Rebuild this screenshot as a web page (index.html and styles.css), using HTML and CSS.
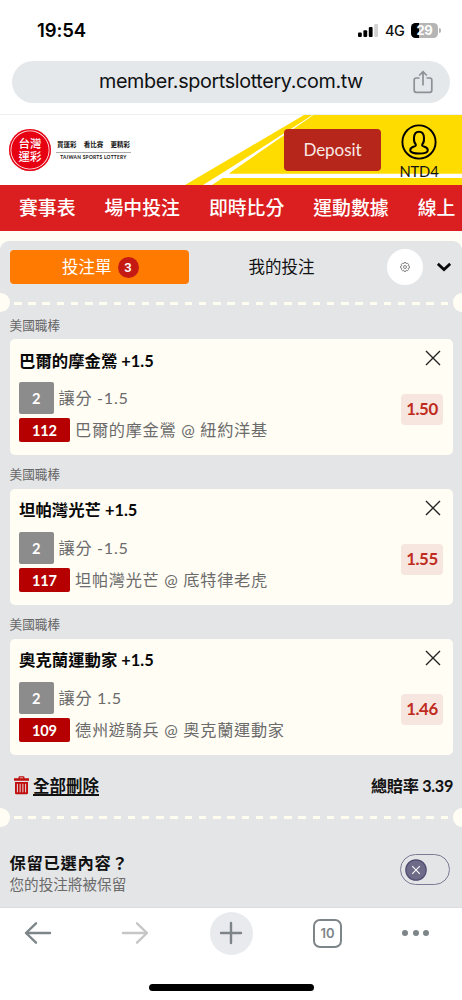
FILE: index.html
```html
<!DOCTYPE html>
<html lang="zh-Hant">
<head>
<meta charset="utf-8">
<meta name="viewport" content="width=device-width">
<title>台灣運彩</title>
<link rel="stylesheet" href="styles.css">
</head>
<body>
<header class="browser">
  <div class="status">
    <span class="clock">19:54</span>
    <svg class="signal" width="20" height="13" viewBox="0 0 20 13"><rect x="0" y="8.5" width="3.8" height="4.5" rx="1"/><rect x="5.4" y="6.2" width="3.8" height="6.8" rx="1"/><rect x="10.8" y="3" width="3.8" height="10" rx="1"/><rect x="16.2" y="0" width="3.8" height="13" rx="1" fill="#d2d2d2"/></svg>
    <span class="network">4G</span>
    <span class="battery">29</span><i class="battery-tip"></i>
  </div>
  <div class="address">
    <span class="url">member.sportslottery.com.tw</span>
    <svg class="share" width="20" height="24" viewBox="0 0 20 24"><path d="M6.500 8H3.200Q1.200 8 1.200 10v10.300q0 2 2 2h13.600q2 0 2-2V10q0-2-2-2h-3.300M10 15.500V2M6.200 5.500L10 1.700l3.800 3.800" fill="none" stroke="#8b9195" stroke-width="1.700"/></svg>
  </div>
</header>
<section class="brandbar">
  <svg class="stripes" width="462" height="70" viewBox="0 0 462 70"><path d="M304 0H462V70H185z" fill="#ffdc00"/><path d="M312 0.300L231 52.500L203 70H212L222.500 63H462V58.800H229L231 57L313.500 0z" fill="#fff"/></svg>
  <div class="seal"><span>台灣</span><span>運彩</span></div>
  <div class="slogan"><p class="slogan-zh"><span>買運彩</span><span>看比賽</span><span>更精彩</span></p><p class="slogan-en">TAIWAN SPORTS LOTTERY</p></div>
  <button class="deposit">Deposit</button>
  <div class="account">
    <svg width="36" height="36" viewBox="0 0 36 36" fill="none" stroke="#000"><circle cx="18" cy="18" r="16.600" stroke-width="1.900"/><path d="M14.700 20.200C13.200 18.800 12.800 16.500 13 14c.1-4 1.800-6.300 5-6.300s4.900 2.300 5 6.300c.2 2.500-.2 4.800-1.700 6.200-.6 1.600.3 2 2.200 2.600 2.200.7 3.300 1.600 3.300 3.500 0 2.300-4 3.300-8.800 3.300s-8.800-1-8.800-3.300c0-1.900 1.100-2.800 3.300-3.500 1.900-.6 2.800-1 2.200-2.600z" stroke-width="2"/></svg>
    <span>NTD4</span>
  </div>
</section>
<nav class="nav"><a>賽事表</a><a>場中投注</a><a>即時比分</a><a>運動數據</a><a>線上</a></nav>
<main class="page">
  <section class="slip">
    <div class="tabs">
      <div class="tab active">投注單<b>3</b></div>
      <div class="tab">我的投注</div>
      <div class="gear"><svg width="10" height="10" viewBox="0 0 10 10" fill="none" stroke="#666" stroke-width=".8"><path d="M4.200.5h1.600l.4 1.200 1.200-.6 1.200 1.200-.6 1.200 1.500.7v1.600L8.100 6.300l.5 1.300-1.100 1.100-1.300-.5-.5 1.300H4.300l-.5-1.300-1.300.5-1.100-1.100.5-1.300L.5 5.800V4.200l1.400-.6-.5-1.300 1.100-1.100 1.300.5z"/><circle cx="5" cy="5" r="1.500"/></svg></div>
      <svg class="chevron" width="14" height="10" viewBox="0 0 14 10"><path d="M.8 1.800L7 7.500L13.200 1.800" fill="none" stroke="#0a0a0a" stroke-width="2.800"/></svg>
    </div>
    <div class="tear"><i></i></div>

    <h3 class="league first">美國職棒</h3>
    <article class="bet">
      <div class="info">
        <h4>巴爾的摩金鶯 +1.5</h4>
        <p class="line"><b class="num grey">2</b>讓分 -1.5</p>
        <p class="line match"><b class="num red">112</b>巴爾的摩金鶯 @ 紐約洋基</p>
      </div>
      <div class="side"><svg class="close" width="16" height="16" viewBox="0 0 16 16"><path d="M1 1L15 15M15 1L1 15"/></svg><b class="odds">1.50</b></div>
    </article>

    <h3 class="league">美國職棒</h3>
    <article class="bet">
      <div class="info">
        <h4>坦帕灣光芒 +1.5</h4>
        <p class="line"><b class="num grey">2</b>讓分 -1.5</p>
        <p class="line match"><b class="num red">117</b>坦帕灣光芒 @ 底特律老虎</p>
      </div>
      <div class="side"><svg class="close" width="16" height="16" viewBox="0 0 16 16"><path d="M1 1L15 15M15 1L1 15"/></svg><b class="odds">1.55</b></div>
    </article>

    <h3 class="league">美國職棒</h3>
    <article class="bet">
      <div class="info">
        <h4>奧克蘭運動家 +1.5</h4>
        <p class="line"><b class="num grey">2</b>讓分 1.5</p>
        <p class="line match"><b class="num red">109</b>德州遊騎兵 @ 奧克蘭運動家</p>
      </div>
      <div class="side"><svg class="close" width="16" height="16" viewBox="0 0 16 16"><path d="M1 1L15 15M15 1L1 15"/></svg><b class="odds">1.46</b></div>
    </article>

    <div class="totals">
      <svg width="15" height="19" viewBox="0 0 15 19"><path d="M0 2.200H4.500V1.500Q4.500.3 5.700.3H9.300Q10.500.3 10.500 1.500V2.200H15V4.700H0zM5.800 1.500V2.200H9.200V1.500zM1 6H14V17Q14 18.300 12.700 18.300H2.300Q1 18.300 1 17z" fill="#c00d0d" fill-rule="evenodd"/><path d="M3.400 7.800V16.300M6.100 7.800V16.300M8.900 7.800V16.300M11.600 7.800V16.300" stroke="#eadada" stroke-width="1"/></svg>
      <a>全部刪除</a>
      <span>總賠率 3.39</span>
    </div>
    <div class="tear"><i></i></div>
    <div class="keep">
      <div><h4>保留已選內容？</h4><p>您的投注將被保留</p></div>
      <div class="toggle"><svg width="22" height="22" viewBox="0 0 22 22"><circle cx="11" cy="11" r="10.200" fill="#6e6b89" stroke="#4f4b70" stroke-width="1.200"/><path d="M7.200 7.200L14.800 14.800M14.800 7.200L7.200 14.800" stroke="#fff" stroke-width="1.100"/></svg></div>
    </div>
  </section>
</main>
<footer class="toolbar">
  <div class="tools">
    <svg width="28" height="24" viewBox="0 0 28 24"><path d="M26 12H2M12 2.300L2 12L12 21.700" stroke="#7d8589"/></svg>
    <svg class="forward" width="28" height="24" viewBox="0 0 28 24"><path d="M2 12H26M16 2.300L26 12L16 21.700" stroke="#c6c6c6"/></svg>
    <div class="plus"><svg width="24" height="24" viewBox="0 0 24 24"><path d="M12 2V22M2 12H22" stroke="#7d8589"/></svg></div>
    <div class="count">10</div>
    <div class="more"><i></i><i></i><i></i></div>
  </div>
  <div class="home"></div>
</footer>
</body>
</html>
```
FILE: styles.css
```css
* { box-sizing: border-box; margin: 0; padding: 0; }
html, body { width: 462px; height: 1000px; overflow: hidden; }
body { display: flex; flex-direction: column; background: #fff; font-family: Lato, "Noto Sans CJK TC", sans-serif; color: #111; }
svg { display: block; flex: none; }
.browser { height: 115px; flex: none; border-bottom: 1px solid #f0f0f0; }
.status { height: 60px; padding-left: 37px; display: flex; align-items: center; font-family: Inter, sans-serif; }
.clock { width: 321px; font-size: 18.500px; font-weight: 600; color: #000; letter-spacing: -.1px; }
.network { width: 26px; margin-left: 7px; font-size: 14.500px; font-weight: 500; letter-spacing: -.5px; }
.battery { width: 27px; height: 15px; border-radius: 4.500px; background: linear-gradient(90deg, #000 29%, #b5b5b5 29%); color: #fff; font-size: 13px; font-weight: 700; line-height: 15px; text-align: center; letter-spacing: -.3px; }
.battery-tip { width: 2px; height: 5px; margin-left: 1px; border-radius: 0 2px 2px 0; background: #b5b5b5; }
.address { margin: .5px 12px 0; height: 42.500px; border-radius: 22px; background: #e5e8eb; display: flex; align-items: center; }
.url { margin-left: 87px; width: 314px; font: 19.800px/41px Inter, sans-serif; letter-spacing: -.37px; color: #101214; white-space: nowrap; }

.brandbar { position: relative; height: 70px; flex: none; display: flex; }
.stripes { position: absolute; left: 0; top: 0; }
.seal { position: relative; width: 42px; height: 42px; margin: 14px 0 0 9px; border-radius: 50%; background: #e60012; box-shadow: inset 0 0 0 1.500px #e60012, inset 0 0 0 2.300px #fff; color: #fff; font: 500 11.500px/12.800px "Noto Sans CJK TC", sans-serif; display: flex; flex-direction: column; align-items: center; justify-content: center; }
.slogan { width: 75px; margin: 23px 0 0 5px; }
.slogan-zh { height: 15px; padding: 0 1px; border-bottom: 1px solid #aaa; display: flex; justify-content: space-between; font: 700 6.500px/12px "Noto Sans CJK TC", sans-serif; }
.slogan-en { font: 700 4.800px/9px Lato, sans-serif; letter-spacing: .3px; text-align: center; white-space: nowrap; }
.deposit { position: relative; width: 97px; height: 42px; margin: 14px 0 0 153px; border: 0; border-radius: 4px; background: #b7261b; color: #f8e9e5; font: 17px/42px Lato, sans-serif; letter-spacing: -.05px; }
.account { position: relative; width: 40px; margin: 9px 0 0 18px; display: flex; flex-direction: column; align-items: center; font-size: 14.800px; line-height: 22px; }
.account span { letter-spacing: -.2px; }
.nav { height: 46px; flex: none; background: #db1f21; display: flex; gap: 29px; padding-left: 19px; overflow: hidden; color: #fff; font: 500 18.850px/44px "Noto Sans CJK TC", sans-serif; white-space: nowrap; }

.page { background: #fffdf4; padding-top: 10px; height: 676px; flex: none; }
.slip { height: 666px; background: #e4e5e7; border-radius: 9px 9px 0 0; overflow: hidden; }
.tabs { height: 52px; display: flex; align-items: center; padding: 0 11px 0 9.500px; font-size: 16.500px; }
.tab { width: 185px; height: 33.500px; line-height: 32px; display: flex; justify-content: center; align-items: center; }
.tab.active { width: 179.500px; background: #ff7a00; color: #fff; border-radius: 4px; gap: 6px; padding-left: 2px; }
.tab b { width: 21px; height: 21px; border-radius: 50%; background: #c51a13; font: 600 13px/21px Roboto, sans-serif; text-align: center; }
.gear { width: 36px; height: 36px; margin-left: 13px; border-radius: 50%; background: #fff; display: flex; align-items: center; justify-content: center; }
.chevron { margin-left: 13.500px; }
.tear { height: 19px; display: flex; align-items: center; justify-content: space-between; }
.tear::before, .tear::after { content: ""; width: 9.500px; height: 19px; flex: none; background: #fffdf4; border-radius: 0 10px 10px 0; }
.tear::after { width: 9px; border-radius: 10px 0 0 10px; }
.tear i { width: 434px; height: 3px; margin-top: 1px; background: repeating-linear-gradient(90deg, #fffdf0 0 7.500px, transparent 7.500px 14.220px); }
.league { height: 33.600px; padding: 2px 0 0 9.500px; font-size: 12.700px; font-weight: 400; line-height: 34px; color: #666; }
.league.first { height: 27px; padding-top: 0; line-height: 26px; }
.bet { margin: 0 9.500px; height: 116.200px; border-radius: 5px; background: #fffdf4; display: flex; justify-content: space-between; padding: 9.600px 9.500px 0 9.500px; }
.bet h4 { height: 33.500px; font-size: 16.400px; line-height: 24px; font-weight: 700; color: #080808; white-space: nowrap; }
.line { height: 32px; display: flex; align-items: center; gap: 5px; font-size: 16.200px; line-height: 22px; letter-spacing: .7px; color: #6b6b6b; white-space: nowrap; }
.line.match { height: 24px; margin-top: 4px; }
.num { flex: none; color: #fff; text-align: center; letter-spacing: -.2px; border-radius: 2px; font-size: 14.600px; }
.num.grey { width: 34.500px; height: 32px; line-height: 33px; background: #8c8c8c; }
.num.red { width: 51px; height: 24px; line-height: 25px; background: #b60000; }
.side { display: flex; flex-direction: column; align-items: flex-end; }
.close { margin: 1.700px 2px 0 0; fill: none; stroke: #222; stroke-width: 1.400; }
.odds { width: 42px; height: 31px; margin-top: 28px; border-radius: 4px; background: #f6e6df; color: #c02b20; text-align: center; font-size: 16.800px; letter-spacing: -.4px; line-height: 30px; }
.totals { height: 53.200px; display: flex; align-items: center; padding: 9px 9px 0 14px; font-size: 16.500px; font-weight: 700; line-height: 22px; }
.totals a { margin-left: 4px; text-decoration: underline; text-decoration-thickness: 1.500px; text-underline-offset: 2px; }
.totals span { margin-left: auto; font-size: 16.200px; letter-spacing: -.3px; }
.keep { display: flex; justify-content: space-between; padding: 25px 12px 0 9.500px; }
.keep h4 { font-size: 16.300px; line-height: 22px; letter-spacing: .7px; }
.keep p { font-size: 14.600px; line-height: 22px; color: #6b6b6b; }
.toggle { width: 50px; height: 31px; margin-top: 2.500px; padding-left: 3.500px; border: 1px solid #7c7995; border-radius: 16px; display: flex; align-items: center; }

.toolbar { height: 93px; flex: none; border-top: 1px solid #dcdde0; background: #fff; }
.tools { height: 50px; padding: 0 33px 0 23.500px; display: flex; align-items: center; }
.tools svg { fill: none; stroke-width: 2.400; stroke-linecap: round; stroke-linejoin: round; }
.forward { margin-left: 69px; }
.plus { width: 43px; height: 43px; margin-left: 61px; border-radius: 50%; background: #e8eaee; display: flex; align-items: center; justify-content: center; }
.count { width: 29px; height: 29px; margin-left: 60.500px; border: 2px solid #7d8589; border-radius: 7px; font: 600 13px/25px Inter, sans-serif; text-align: center; color: #7d8589; }
.more { display: flex; gap: 4.500px; margin-left: auto; }
.more i { width: 6px; height: 6px; border-radius: 50%; background: #7d8589; }
.home { width: 165px; height: 6.500px; margin: 26px 0 0 149px; border-radius: 4px; background: #000; }
```
